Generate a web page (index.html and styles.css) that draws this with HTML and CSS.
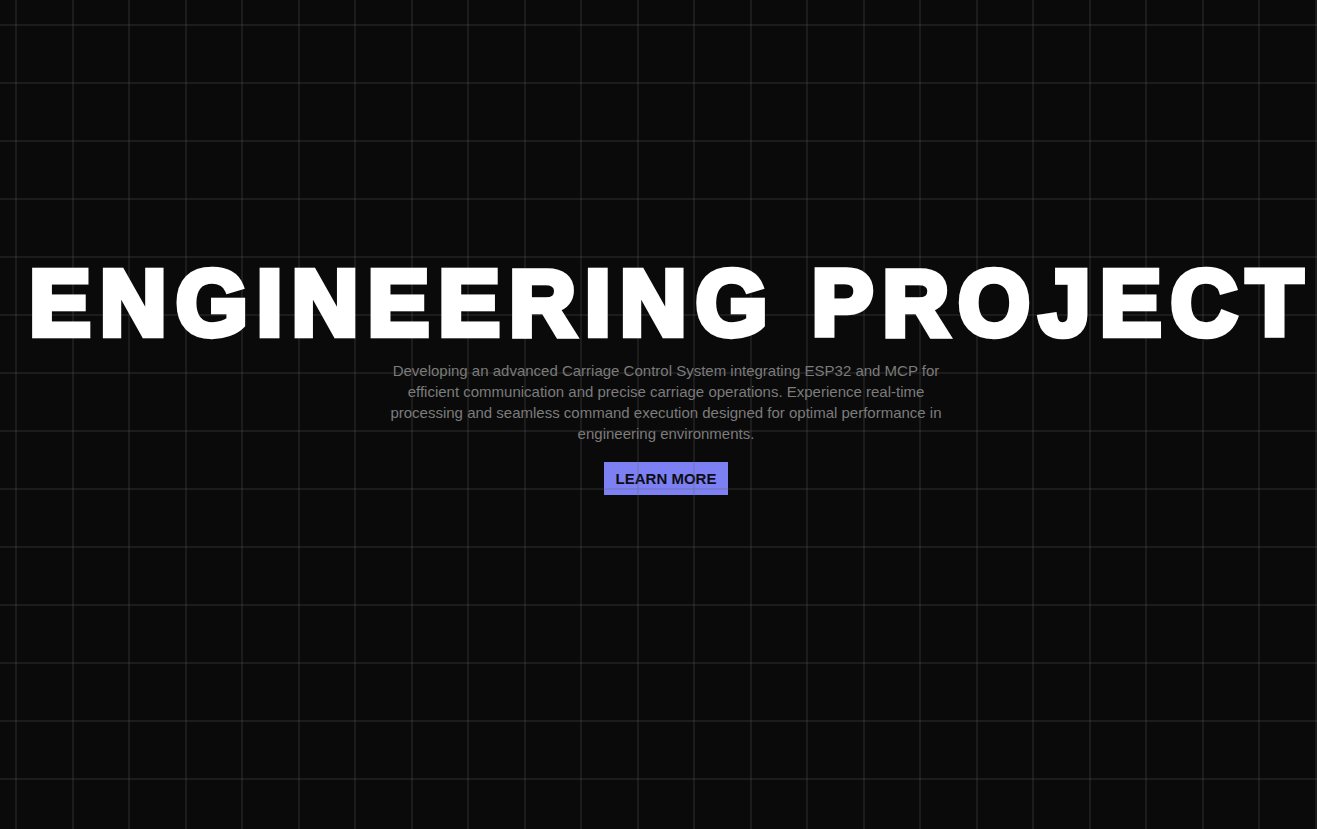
FILE: index.html
```html
<!DOCTYPE html>
<html lang="en">
<head>
<meta charset="utf-8">
<title>Engineering Project</title>
<link rel="stylesheet" href="styles.css">
</head>
<body>
<main class="hero">
  <h1 class="hero-title">ENGINEERING PROJECT</h1>
  <p class="hero-text">Developing an advanced Carriage Control System integrating ESP32 and MCP for efficient communication and precise carriage operations. Experience real-time processing and seamless command execution designed for optimal performance in engineering environments.</p>
  <button class="hero-button" type="button">LEARN MORE</button>
</main>
<div class="grid-overlay"></div>
</body>
</html>
```

FILE: styles.css
```css
html, body {
  margin: 0;
  padding: 0;
  height: 100%;
  overflow: hidden;
}

body {
  background-color: #0a0a0a;
  font-family: "Liberation Sans", Arial, sans-serif;
  color: #ffffff;
  position: relative;
}

.grid-overlay {
  position: fixed;
  inset: 0;
  pointer-events: none;
  z-index: 1;
  background-image:
    repeating-linear-gradient(90deg, transparent 0 15px, rgba(100, 100, 100, 0.2) 15px 17px, transparent 17px 56.52px),
    repeating-linear-gradient(180deg, transparent 0 24px, rgba(100, 100, 100, 0.2) 24px 26px, transparent 26px 58px);
}

.hero {
  display: flex;
  flex-direction: column;
  align-items: center;
  padding: 257px 0 0 15px;
  box-sizing: border-box;
  height: 100%;
}

.hero-title {
  position: relative;
  z-index: 2;
  margin: 0;
  font-family: "Liberation Sans", Arial, sans-serif;
  font-weight: 700;
  font-size: 92px;
  line-height: 92px;
  letter-spacing: 9.4px;
  margin-right: -9.4px;
  color: #ffffff;
  -webkit-text-stroke: 6.5px #ffffff;
  white-space: nowrap;
}

.hero-text {
  margin: 11px 0 0;
  max-width: 570px;
  font-size: 15px;
  line-height: 21px;
  color: #7c7c7c;
  text-align: center;
}

.hero-button {
  margin-top: 18px;
  padding: 8px 12px;
  border: 0;
  border-radius: 0;
  background-color: #7c80f2;
  color: #0d0d14;
  font-family: "Liberation Sans", Arial, sans-serif;
  font-weight: 700;
  font-size: 15px;
  line-height: 17px;
  cursor: pointer;
}
```
